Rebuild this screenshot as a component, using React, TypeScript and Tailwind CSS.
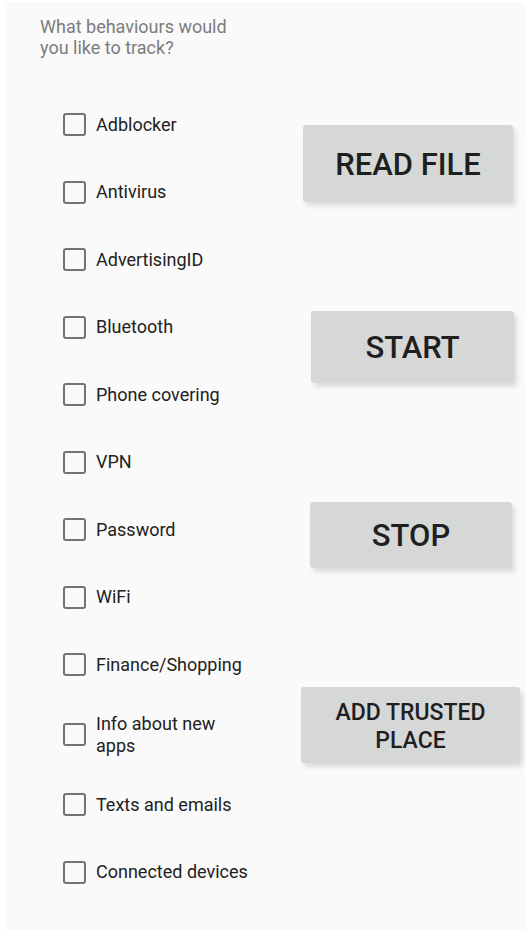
const behaviours = [
  "Adblocker",
  "Antivirus",
  "AdvertisingID",
  "Bluetooth",
  "Phone covering",
  "VPN",
  "Password",
  "WiFi",
  "Finance/Shopping",
  "Info about new apps",
  "Texts and emails",
  "Connected devices",
];

const Checkbox = ({ label }: { label: string }) => {
  const tall = label === "Info about new apps";
  return (
    <label
      className={`flex items-center pl-[58px] ${tall ? "h-[72.5px]" : "h-[67.5px]"}`}
    >
      <span className="w-[23px] h-[23px] shrink-0 border-2 border-[#737373] rounded-[3px]" />
      <span className="ml-[10px] text-[18px] leading-[22px] text-[#212121] whitespace-nowrap">
        {tall ? (
          <>
            Info about new
            <br />
            apps
          </>
        ) : (
          label
        )}
      </span>
    </label>
  );
};

const ActionButton = ({
  text,
  className,
}: {
  text: React.ReactNode;
  className: string;
}) => (
  <button
    className={`flex items-center justify-center pt-[3px] bg-[#d6d7d7] text-[#1f1f1f] font-medium rounded-[3px] shadow-[3px_4px_5px_rgba(0,0,0,0.12)] ${className}`}
  >
    {text}
  </button>
);

export default function App() {
  return (
    <div className="w-[530px] h-[938px] bg-white pt-[2px] px-[5px]" style={{ fontFamily: "Roboto, 'Noto Sans', sans-serif" }}>
      <div className="h-[928px] bg-[#fafafa] flex">
        {/* Left column: question + checkbox list */}
        <div className="w-[290px]">
          <p className="pl-[35px] pt-[14px] text-[18px] leading-[21px] text-[#7c7c7c]">
            What behaviours would
            <br />
            you like to track?
          </p>
          <div className="mt-[33px]">
            {behaviours.map((b) => (
              <Checkbox key={b} label={b} />
            ))}
          </div>
        </div>

        {/* Right column: buttons */}
        <div className="flex flex-col items-start">
          <ActionButton
            text="READ FILE"
            className="ml-[8px] mt-[123px] w-[210px] h-[77px] text-[31px]"
          />
          <ActionButton
            text="START"
            className="ml-[16px] mt-[109px] w-[203px] h-[72px] text-[31px]"
          />
          <ActionButton
            text="STOP"
            className="ml-[15px] mt-[119px] w-[202px] h-[66px] text-[31px]"
          />
          <ActionButton
            text={
              <span className="leading-[28px]">
                ADD TRUSTED
                <br />
                PLACE
              </span>
            }
            className="ml-[6px] mt-[119px] w-[219px] h-[76px] text-[23px]"
          />
        </div>
      </div>
    </div>
  );
}
